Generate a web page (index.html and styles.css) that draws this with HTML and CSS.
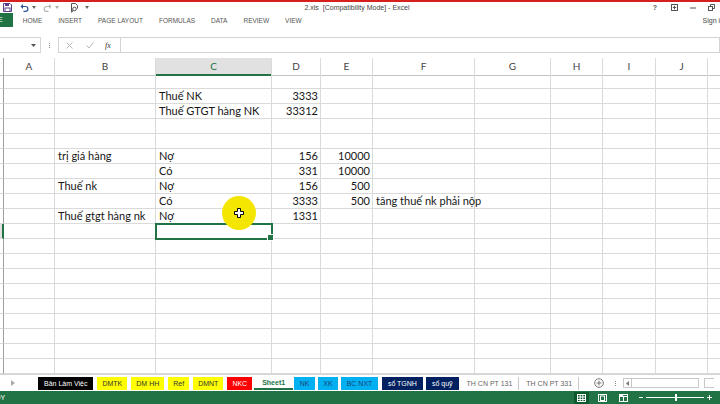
FILE: index.html
```html
<!DOCTYPE html>
<html lang="vi">
<head>
<meta charset="utf-8">
<title>2.xls [Compatibility Mode] - Excel</title>
<link rel="stylesheet" href="styles.css">
</head>
<body>
<div class="app">
  <header class="titlebar">
    <div class="qat">
      <svg class="ic-save" width="9" height="9" viewBox="0 0 9 9"><path d="M0.5 0.5h6.5l1.5 1.5v6.5h-8z" fill="none" stroke="#5a3d8f"/><rect x="2" y="0.5" width="4" height="2.5" fill="#5a3d8f"/><rect x="2" y="5" width="5" height="3.5" fill="none" stroke="#5a3d8f"/></svg>
      <svg class="ic-undo" width="9" height="9" viewBox="0 0 9 9"><path d="M2 3.5h3.5a2.4 2.4 0 0 1 0 4.8h-2" fill="none" stroke="#2b579a" stroke-width="1.2"/><path d="M0.5 3.5l2.5-2.5v5z" fill="#2b579a"/></svg>
      <svg class="caret" width="4" height="3" viewBox="0 0 4 3"><path d="M0 0h4l-2 3z" fill="#666"/></svg>
      <svg class="ic-redo" width="9" height="9" viewBox="0 0 9 9"><path d="M7 3.5h-3.5a2.4 2.4 0 0 0 0 4.8h2" fill="none" stroke="#b5b5b5" stroke-width="1.2"/><path d="M8.5 3.5l-2.5-2.5v5z" fill="#b5b5b5"/></svg>
      <svg class="caret" width="4" height="3" viewBox="0 0 4 3"><path d="M0 0h4l-2 3z" fill="#aaa"/></svg>
      <svg class="ic-prev" width="9" height="10" viewBox="0 0 9 10"><path d="M1.5 0.5h4l2 2v3" fill="none" stroke="#555"/><path d="M1.5 0.5v8" fill="none" stroke="#555"/><circle cx="4.5" cy="6" r="1.8" fill="none" stroke="#555"/><path d="M3.2 7.4l-2 2" stroke="#555" stroke-width="1.2"/></svg>
      <svg class="caret" width="4" height="3" viewBox="0 0 4 3"><path d="M0 0h4l-2 3z" fill="#666"/></svg>
    </div>
    <div class="title">2.xls&nbsp; [Compatibility Mode] - Excel</div>
    <div class="winctl">
      <span class="help">?</span>
      <svg width="7" height="7" viewBox="0 0 7 7"><rect x="0.5" y="0.5" width="6" height="6" fill="none" stroke="#555"/><path d="M3.5 1.8v3.6M1.8 3.5h3.4" stroke="#555"/></svg>
      <svg width="6" height="7" viewBox="0 0 6 7"><path d="M0 4h6" stroke="#555"/></svg>
      <svg width="7" height="7" viewBox="0 0 7 7"><rect x="0.5" y="2.5" width="4" height="4" fill="none" stroke="#555"/><path d="M2.5 2.5v-2h4v4h-2" fill="none" stroke="#555"/></svg>
    </div>
  </header>

  <nav class="ribbon">
    <span class="file">FILE</span>
    <span class="rtab first">HOME</span>
    <span class="rtab">INSERT</span>
    <span class="rtab">PAGE LAYOUT</span>
    <span class="rtab">FORMULAS</span>
    <span class="rtab">DATA</span>
    <span class="rtab">REVIEW</span>
    <span class="rtab">VIEW</span>
    <span class="signin">Sign in</span>
  </nav>

  <div class="fbar">
    <div class="namebox"><svg width="5" height="3" viewBox="0 0 5 3"><path d="M0 0h5l-2.5 3z" fill="#555"/></svg></div>
    <div class="dots"><i></i><i></i><i></i></div>
    <div class="fxbox">
      <svg width="7" height="7" viewBox="0 0 7 7"><path d="M0.5 0.5l6 6M6.5 0.5l-6 6" stroke="#b8b8b8"/></svg>
      <svg width="8" height="7" viewBox="0 0 8 7"><path d="M0.5 3.5l2.5 2.5 4.5-5.5" fill="none" stroke="#b8b8b8"/></svg>
      <span class="fx">fx</span>
    </div>
    <div class="finput"></div>
  </div>

  <main class="sheet">
    <div class="row head"><span class="rh"></span><span>A</span><span>B</span><span class="on">C</span><span>D</span><span>E</span><span>F</span><span>G</span><span>H</span><span>I</span><span>J</span><span>K</span></div>
    <div class="row"><span class="rh"></span><span></span><span></span><span></span><span></span><span></span><span></span><span></span><span></span><span></span><span></span><span></span></div>
    <div class="row"><span class="rh"></span><span></span><span></span><span>Thuế NK</span><span class="n">3333</span><span></span><span></span><span></span><span></span><span></span><span></span><span></span></div>
    <div class="row"><span class="rh"></span><span></span><span></span><span>Thuế GTGT hàng NK</span><span class="n">33312</span><span></span><span></span><span></span><span></span><span></span><span></span><span></span></div>
    <div class="row"><span class="rh"></span><span></span><span></span><span></span><span></span><span></span><span></span><span></span><span></span><span></span><span></span><span></span></div>
    <div class="row"><span class="rh"></span><span></span><span></span><span></span><span></span><span></span><span></span><span></span><span></span><span></span><span></span><span></span></div>
    <div class="row"><span class="rh"></span><span></span><span>trị giá hàng</span><span>Nợ</span><span class="n">156</span><span class="n">10000</span><span></span><span></span><span></span><span></span><span></span><span></span></div>
    <div class="row"><span class="rh"></span><span></span><span></span><span>Có</span><span class="n">331</span><span class="n">10000</span><span></span><span></span><span></span><span></span><span></span><span></span></div>
    <div class="row"><span class="rh"></span><span></span><span>Thuế nk</span><span>Nợ</span><span class="n">156</span><span class="n">500</span><span></span><span></span><span></span><span></span><span></span><span></span></div>
    <div class="row"><span class="rh"></span><span></span><span></span><span>Có</span><span class="n">3333</span><span class="n">500</span><span>tăng thuế nk phải nộp</span><span></span><span></span><span></span><span></span><span></span></div>
    <div class="row"><span class="rh"></span><span></span><span>Thuế gtgt hàng nk</span><span>Nợ</span><span class="n">1331</span><span></span><span></span><span></span><span></span><span></span><span></span><span></span></div>
    <div class="row cur"><span class="rh"></span><span></span><span></span><span class="sel"></span><span></span><span></span><span></span><span></span><span></span><span></span><span></span><span></span></div>
    <div class="row"><span class="rh"></span><span></span><span></span><span></span><span></span><span></span><span></span><span></span><span></span><span></span><span></span><span></span></div>
    <div class="row"><span class="rh"></span><span></span><span></span><span></span><span></span><span></span><span></span><span></span><span></span><span></span><span></span><span></span></div>
    <div class="row"><span class="rh"></span><span></span><span></span><span></span><span></span><span></span><span></span><span></span><span></span><span></span><span></span><span></span></div>
    <div class="row"><span class="rh"></span><span></span><span></span><span></span><span></span><span></span><span></span><span></span><span></span><span></span><span></span><span></span></div>
    <div class="row"><span class="rh"></span><span></span><span></span><span></span><span></span><span></span><span></span><span></span><span></span><span></span><span></span><span></span></div>
    <div class="row"><span class="rh"></span><span></span><span></span><span></span><span></span><span></span><span></span><span></span><span></span><span></span><span></span><span></span></div>
    <div class="row"><span class="rh"></span><span></span><span></span><span></span><span></span><span></span><span></span><span></span><span></span><span></span><span></span><span></span></div>
    <div class="row"><span class="rh"></span><span></span><span></span><span></span><span></span><span></span><span></span><span></span><span></span><span></span><span></span><span></span></div>
    <div class="row"><span class="rh"></span><span></span><span></span><span></span><span></span><span></span><span></span><span></span><span></span><span></span><span></span><span></span></div>
    <div class="cursor"><svg width="10" height="10" viewBox="0 0 10 10"><path d="M3.5 0.5h3v3h3v3h-3v3h-3v-3h-3v-3h3z" fill="#fff" stroke="#000"/></svg></div>
  </main>

  <div class="tabsbar">
    <svg class="tarrow" width="4" height="6" viewBox="0 0 4 6"><path d="M0 0l4 3-4 3z" fill="#aaa"/></svg>
    <div class="tabs">
      <span class="stab t-black">Bản Làm Việc</span>
      <span class="stab t-yellow">DMTK</span>
      <span class="stab t-yellow">DM HH</span>
      <span class="stab t-yellow">Ref</span>
      <span class="stab t-yellow">DMNT</span>
      <span class="stab t-red">NKC</span>
      <span class="stab t-active">Sheet1</span>
      <span class="stab t-blue">NK</span>
      <span class="stab t-blue">XK</span>
      <span class="stab t-blue">BC NXT</span>
      <span class="stab t-navy">sổ TGNH</span>
      <span class="stab t-navy">sổ quỹ</span>
      <span class="stab t-plain">TH CN PT 131</span>
      <span class="stab t-plain">TH CN PT 331</span>
    </div>
    <svg class="addsheet" width="10" height="10" viewBox="0 0 10 10"><circle cx="5" cy="5" r="4.3" fill="none" stroke="#777"/><path d="M5 2.6v4.8M2.6 5h4.8" stroke="#777"/></svg>
    <div class="vdots"><i></i><i></i><i></i></div>
    <div class="hscroll">
      <span class="harrow"><svg width="3" height="5" viewBox="0 0 3 5"><path d="M3 0v5L0 2.5z" fill="#777"/></svg></span>
      <span class="hthumb"></span>
      <span class="hright"></span>
    </div>
  </div>

  <footer class="status">
    <span class="ready">READY</span>
    <div class="views">
      <span class="view on"><svg width="9" height="8" viewBox="0 0 9 8"><rect x="0.5" y="0.5" width="8" height="7" fill="none" stroke="#fff"/><path d="M0.5 3h8M0.5 5.5h8M3.2 0.5v7M5.8 0.5v7" stroke="#fff"/></svg></span>
      <span class="view"><svg width="9" height="8" viewBox="0 0 9 8"><rect x="0.5" y="0.5" width="8" height="7" fill="none" stroke="#fff"/><rect x="2.5" y="2" width="4" height="4.5" fill="none" stroke="#fff"/></svg></span>
      <span class="view"><svg width="9" height="8" viewBox="0 0 9 8"><rect x="0.5" y="0.5" width="8" height="7" fill="none" stroke="#fff"/><path d="M0.5 2.5h8M4.5 2.5v5" stroke="#fff"/><rect x="1" y="1" width="3" height="1.5" fill="#fff"/></svg></span>
    </div>
    <div class="zoom">
      <span class="zminus"></span>
      <span class="ztrack"><span class="zthumb"></span></span>
      <span class="zplus"></span>
    </div>
  </footer>
</div>
</body>
</html>
```

FILE: styles.css
```css
* { box-sizing: border-box; margin: 0; padding: 0; }
html, body { width: 720px; height: 404px; overflow: hidden; background: #fff; }
body { font-family: "Liberation Sans", Arial, sans-serif; color: #222; }

.app { width: 720px; height: 404px; display: flex; flex-direction: column; overflow: hidden; }

/* title bar */
.titlebar {
  height: 13px; flex: none;
  border-top: 2px solid #d7201c;
  display: grid; grid-template-columns: 1fr auto 1fr; align-items: center;
}
.qat { display: flex; align-items: center; padding-left: 3px; }
.qat svg { display: block; flex: none; }
.qat .ic-undo { margin-left: 8px; }
.qat .ic-redo { margin-left: 7px; }
.qat .ic-prev { margin-left: 11px; }
.qat .caret { margin-left: 3px; }
.qat .ic-prev + .caret { margin-left: 6px; }
.title { font-size: 7px; color: #444; letter-spacing: 0; padding-right: 6px; }
.winctl { display: flex; justify-content: flex-end; align-items: center; gap: 12px; padding-right: 5px; }
.winctl svg { display: block; flex: none; }
.help { font-size: 7px; color: #555; font-weight: bold; margin-right: 2px; }

/* ribbon tabs */
.ribbon { height: 14px; flex: none; display: flex; align-items: center; margin-bottom: 10px; }
.file {
  height: 14px; line-height: 14px; background: #217346; color: #fff;
  font-size: 7px; padding: 0 10px 0 6px; margin-left: -18px;
}
.rtab { font-size: 6.5px; color: #555; padding: 0 8px; }
.rtab.first { margin-left: 2px; }
.signin { margin-left: auto; font-size: 7px; color: #444; margin-right: -4px; }

/* formula bar */
.fbar { height: 16px; flex: none; display: flex; margin-bottom: 5px; }
.namebox {
  width: 41px; border: 1px solid #d4d4d4; border-left: none;
  display: flex; align-items: center; justify-content: flex-end; padding-right: 4px;
}
.dots { width: 17px; display: flex; flex-direction: column; align-items: center; justify-content: center; gap: 1px; }
.dots i, .vdots i { display: block; width: 1px; height: 1px; background: #888; }
.fxbox {
  width: 63px; border: 1px solid #d4d4d4;
  display: flex; align-items: center; padding-left: 7px; gap: 13px;
}
.fxbox svg { display: block; }
.fx { font-family: "Liberation Serif", serif; font-style: italic; font-size: 8px; color: #333; margin-left: -2px; }
.finput { flex: 1; border: 1px solid #d4d4d4; border-left: none; }

/* sheet */
.sheet { flex: 1; position: relative; overflow: hidden; }
.row {
  display: grid; height: 15px;
  grid-template-columns: 4px 51px 101px 116px 49px 52px 102px 76px 52px 53px 52px 40px;
}
.row > span {
  border-right: 1px solid #dadada; border-bottom: 1px solid #dadada;
  font-family: Lato, "Liberation Sans", sans-serif; font-size: 11px; line-height: 14px;
  padding: 0 3px; white-space: nowrap; color: #161616;
}
.row > .rh { border-right: 1px solid #9f9f9f; padding: 0; }
.row > .n { text-align: right; padding-right: 2px; }
.row.head { height: 16px; }
.row.head > span {
  border-bottom: 1px solid #c4c4c4; text-align: center;
  color: #444; font-size: 10px; line-height: 16px;
}
.row.head > .on { background: #e1e1e1; color: #217346; border-bottom: 2px solid #217346; }
.row.cur > .rh { border-right: 2px solid #217346; background: #e1e1e1; }
.row > .sel { position: relative; z-index: 2; outline: 2px solid #217346; outline-offset: -1px; }
.sel::after {
  content: ""; position: absolute; right: -3px; bottom: -3px;
  width: 5px; height: 5px; background: #217346; border: 1px solid #fff;
}
.cursor {
  position: absolute; left: 222px; top: 138px; width: 34px; height: 34px; border-radius: 50%;
  background: #f4e600; z-index: 3; display: flex; align-items: center; justify-content: center;
}
.cursor svg { display: block; }

/* sheet tabs */
.tabsbar {
  height: 17px; flex: none; display: flex; align-items: center;
  border-top: 1px solid #d4d4d4; background: #fff;
}
.tarrow { display: block; flex: none; margin-left: 11px; }
.tabs { display: flex; flex: none; align-items: center; gap: 4px; margin-left: 23px; height: 13px; }
.stab {
  flex: none; height: 13px; line-height: 13px; font-size: 7px; padding: 0 6px; white-space: nowrap; color: #333;
}
.t-black { background: #000; color: #fff; padding: 0 6px; }
.t-yellow { background: #ffff00; color: #333; padding: 0 5px; }
.t-red { background: #ff0000; color: #fff; padding: 0 5px; }
.t-active { background: #fff; color: #217346; font-weight: bold; border-bottom: 2px solid #217346; line-height: 12px; padding: 0 8px; margin: 0 -3px 0 -2px; }
.t-blue { background: #00b0f0; color: #1f3f7a; padding: 0 5.5px; }
.t-blue + .t-blue { margin-left: -1px; }
.t-navy { background: #002060; color: #fff; padding: 0 6px; }
.t-navy + .t-navy { margin-left: -1px; }
.t-plain { color: #666; border-right: 1px solid #c8c8c8; padding: 0 6px 0 4px; margin-right: -1px; }
.addsheet { display: block; flex: none; margin-left: 16px; }
.vdots { display: flex; flex: none; flex-direction: column; gap: 1px; margin-left: 11px; }
.hscroll { display: flex; align-items: stretch; height: 10px; margin-left: 7px; flex: 1; min-width: 0; }
.harrow { flex: none; width: 9px; border: 1px solid #c8c8c8; display: flex; align-items: center; justify-content: center; }
.harrow svg { display: block; }
.hthumb { flex: none; width: 67px; border: 1px solid #c8c8c8; border-left: none; }
.hright { flex: none; width: 10px; margin-left: 5px; border: 1px solid #c8c8c8; border-right: none; }

/* status bar */
.status {
  height: 13px; flex: none; background: #217346;
  display: flex; align-items: center; color: #fff;
}
.ready { font-size: 7px; margin-left: -19px; }
.views { display: flex; align-items: center; margin-left: auto; gap: 6px; }
.view { width: 15px; height: 12px; display: flex; align-items: center; justify-content: center; }
.view.on { background: #0f5a2c; }
.view svg { display: block; }
.zoom { display: flex; align-items: center; margin-left: 8px; margin-right: 8px; }
.zminus { width: 4px; height: 1px; background: #fff; }
.ztrack { position: relative; width: 58px; height: 1px; background: #fff; margin: 0 3px; }
.zthumb { position: absolute; left: 29px; top: -3px; width: 2px; height: 7px; background: #fff; }
.zplus { position: relative; width: 5px; height: 1px; background: #fff; }
.zplus::after { content: ""; position: absolute; left: 2px; top: -2px; width: 1px; height: 5px; background: #fff; }
```
